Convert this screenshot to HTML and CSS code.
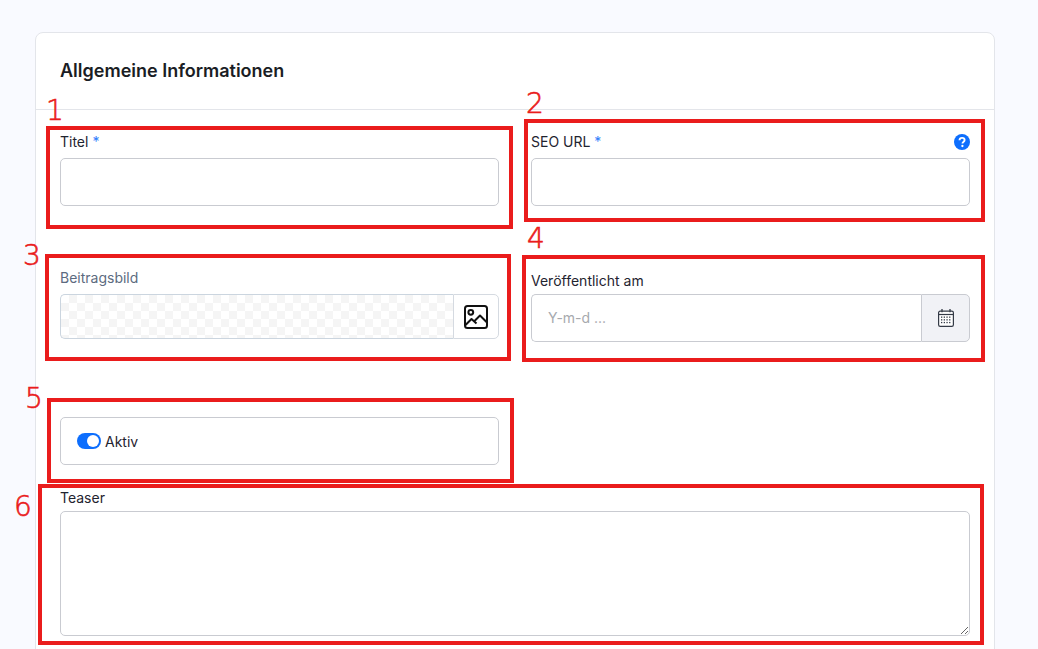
FILE: index.html
```html
<!DOCTYPE html>
<html lang="de">
<head>
<meta charset="utf-8">
<title>Allgemeine Informationen</title>
<link rel="stylesheet" href="styles.css">
</head>
<body>
<section class="card">
  <header class="card-head"><h2>Allgemeine Informationen</h2></header>
  <div class="card-body">
    <div class="grid">
      <div class="field">
        <div class="label-row"><label>Titel <span class="req">*</span></label></div>
        <div class="input"></div>
      </div>
      <div class="field">
        <div class="label-row"><label>SEO URL <span class="req">*</span></label>
          <svg class="help" viewBox="0 0 16 16" aria-hidden="true"><circle cx="8" cy="8" r="8" fill="#0d6efd"/><path d="M5.500 6.200C5.600 4.700 6.600 3.900 8.100 3.900c1.500 0 2.500.9 2.500 2.100 0 .9-.5 1.400-1.200 1.900-.7.5-.9.8-.9 1.500v.2" fill="none" stroke="#fff" stroke-width="1.900"/><circle cx="8.400" cy="12" r="1.150" fill="#fff"/></svg>
        </div>
        <div class="input"></div>
      </div>
      <div class="field">
        <div class="label-row"><label class="muted">Beitragsbild</label></div>
        <div class="media">
          <div class="checker"></div>
          <div class="media-btn">
            <svg class="img-icon" viewBox="0 0 24 24" fill="none" stroke="#111" stroke-width="2" stroke-linejoin="round" aria-hidden="true"><rect x="1" y="1" width="22" height="22" rx="2.500"/><circle cx="6.800" cy="7.300" r="2.400"/><path d="M1.500 20 7.500 14l5 4.500M10.500 16 16 10.500l7 7"/></svg>
          </div>
        </div>
      </div>
      <div class="field">
        <div class="label-row low"><label>Veröffentlicht am</label></div>
        <div class="date">
          <div class="date-input">Y-m-d ...</div>
          <div class="date-btn">
            <svg class="cal" viewBox="0 0 16 18" aria-hidden="true"><rect x=".6" y="2.100" width="14.800" height="15.300" rx="1.600" fill="#fff" stroke="#343a46" stroke-width="1.200"/><path d="M1 5.500h14" stroke="#343a46" stroke-width="1.200"/><path d="M4 0v3.200M12 0v3.200" stroke="#343a46" stroke-width="1.300"/><g fill="#343a46"><rect x="3" y="7.500" width="1.300" height="1.300"/><rect x="5.700" y="7.500" width="1.300" height="1.300"/><rect x="8.400" y="7.500" width="1.300" height="1.300"/><rect x="11.100" y="7.500" width="1.300" height="1.300"/><rect x="3" y="10.200" width="1.300" height="1.300"/><rect x="5.700" y="10.200" width="1.300" height="1.300"/><rect x="8.400" y="10.200" width="1.300" height="1.300"/><rect x="11.100" y="10.200" width="1.300" height="1.300"/><rect x="3" y="12.900" width="1.300" height="1.300"/><rect x="5.700" y="12.900" width="1.300" height="1.300"/><rect x="8.400" y="12.900" width="1.300" height="1.300"/><rect x="11.100" y="12.900" width="1.300" height="1.300"/></g></svg>
          </div>
        </div>
      </div>
      <div class="field switch-field">
        <div class="switch-box"><span class="switch"><span class="knob"></span></span><span class="switch-text">Aktiv</span></div>
      </div>
    </div>
    <div class="field teaser">
      <div class="label-row tight"><label>Teaser</label></div>
      <textarea class="area"></textarea>
    </div>
  </div>
</section>

<div class="mark m1"></div><span class="num n1">1</span>
<div class="mark m2"></div><span class="num n2">2</span>
<div class="mark m3"></div><span class="num n3">3</span>
<div class="mark m4"></div><span class="num n4">4</span>
<div class="mark m5"></div><span class="num n5">5</span>
<div class="mark m6"></div><span class="num n6">6</span>
</body>
</html>
```
FILE: styles.css
```css
* { box-sizing: border-box; }
html, body { margin: 0; height: 649px; overflow: hidden; }
body {
  background: #f9faff;
  font-family: Inter, "Liberation Sans", sans-serif;
  font-size: 14px;
  color: #1f2430;
  padding: 32px 43px 0 35px;
  position: relative;
}
.card {
  background: #fff;
  border: 1px solid #e3e5ea;
  border-radius: 8px;
  height: 800px;
}
.card-head {
  height: 77px;
  padding: 28px 24px 0;
  border-bottom: 1px solid #e3e5ea;
}
.card-head h2 {
  margin: 0;
  font-size: 18px;
  line-height: 20px;
  font-weight: 600;
  color: #1a1d24;
}
.card-body { padding: 22px 24px 0; }
.grid {
  display: grid;
  grid-template-columns: 1fr 1fr;
  column-gap: 32px;
  row-gap: 62px;
}
.label-row {
  height: 20px;
  margin-bottom: 6px;
  display: flex;
  justify-content: space-between;
  align-items: center;
  line-height: 20px;
}
.label-row.tight { margin-bottom: 3px; }
.label-row.low { margin-top: 3px; margin-bottom: 3px; }
.req { color: #2f7dfb; }
.muted { color: #5c6b80; }
.help { width: 16px; height: 16px; }
.input {
  height: 48px;
  background: #fff;
  border: 1px solid #c9cbd1;
  border-radius: 5px;
}
.media { display: flex; height: 45px; }
.checker {
  flex: 1;
  border: 1px solid #cbd5df;
  border-right: 0;
  border-radius: 5px 0 0 5px;
  background: repeating-conic-gradient(#f5f5f5 0 25%, #fff 0 50%) 0 0 / 16px 16px;
}
.media-btn {
  width: 46px;
  border: 1px solid #d5dae1;
  border-radius: 0 5px 5px 0;
  display: flex;
  align-items: center;
  justify-content: center;
}
.img-icon { width: 24px; height: 24px; }
.date { display: flex; height: 48px; }
.date-input {
  flex: 1;
  border: 1px solid #c9cbd1;
  border-right: 0;
  border-radius: 5px 0 0 5px;
  padding-left: 16px;
  line-height: 46px;
  color: #a6a9ae;
}
.date-btn {
  width: 49px;
  background: #f1f2f6;
  border: 1px solid #c9cbd1;
  border-radius: 0 5px 5px 0;
  display: flex;
  align-items: center;
  justify-content: center;
}
.cal { width: 16px; height: 18px; }
.switch-field { margin-top: 13px; }
.switch-box {
  height: 48px;
  border: 1px solid #c9cbd1;
  border-radius: 5px;
  padding-left: 16px;
  display: flex;
  align-items: center;
  gap: 4px;
}
.switch {
  width: 24px;
  height: 16px;
  background: #0d6efd;
  border-radius: 8px;
  display: flex;
  align-items: center;
  justify-content: flex-end;
  padding-right: 2px;
}
.knob { width: 12px; height: 12px; background: #fff; border-radius: 50%; }
.teaser { margin-top: 23px; }
.area {
  display: block;
  width: 100%;
  height: 125px;
  border: 1px solid #c9cbd1;
  border-radius: 5px;
  background: #fff;
  margin: 0;
}
.mark {
  position: absolute;
  border: 4px solid #ea1c1c;
}
.m1 { left: 46px; top: 126px; width: 467px; height: 103px; }
.m2 { left: 524px; top: 119px; width: 461px; height: 103px; }
.m3 { left: 45px; top: 254px; width: 466px; height: 107px; }
.m4 { left: 522px; top: 255px; width: 463px; height: 107px; }
.m5 { left: 47px; top: 398px; width: 467px; height: 85px; }
.m6 { left: 38px; top: 484px; width: 946px; height: 161px; }
.num {
  position: absolute;
  font-family: "DejaVu Sans", sans-serif;
  font-weight: 200;
  -webkit-text-stroke: 0.6px #ea1c1c;
  font-size: 28px;
  line-height: 32px;
  color: #ea1c1c;
}
.n1 { left: 46px; top: 95px; }
.n2 { left: 526px; top: 88px; }
.n3 { left: 23px; top: 240px; }
.n4 { left: 527px; top: 223px; }
.n5 { left: 25px; top: 383px; }
.n6 { left: 14px; top: 491px; }
```
